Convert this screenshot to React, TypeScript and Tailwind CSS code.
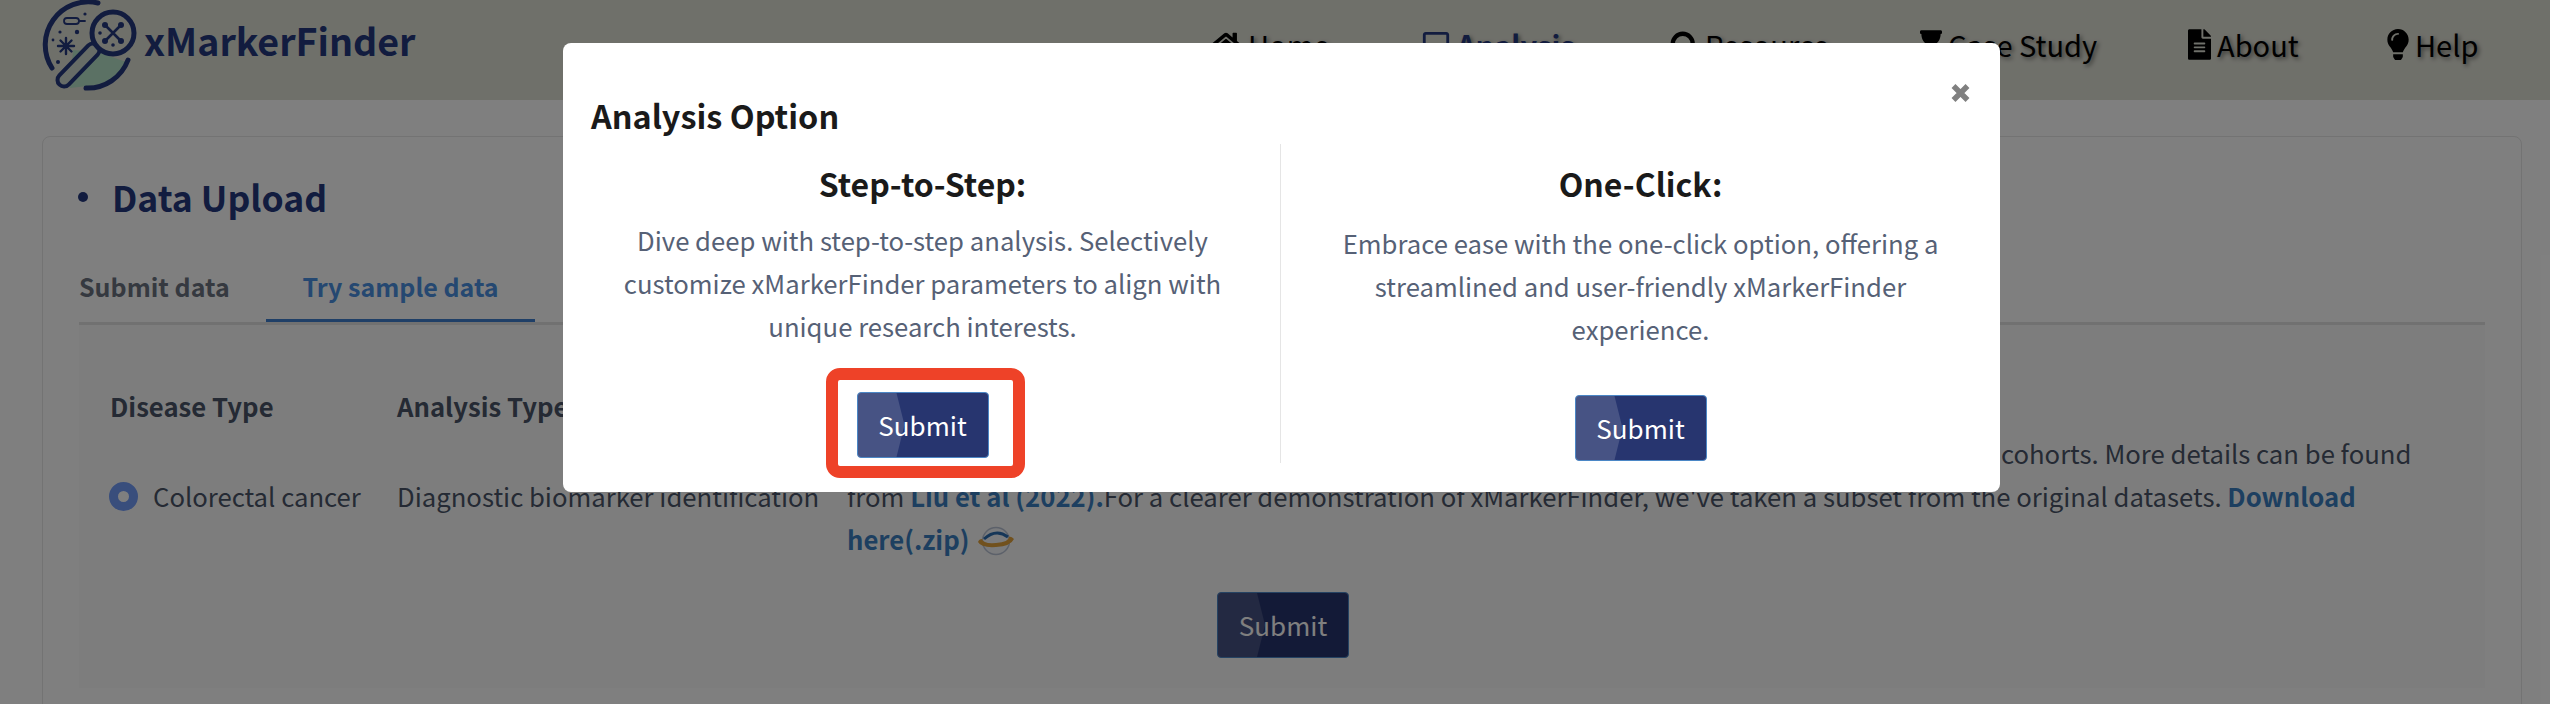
import { FaHome, FaRegSquare, FaFileAlt, FaLightbulb, FaHourglass } from "react-icons/fa";
import { FiSearch } from "react-icons/fi";

const fontStack = { fontFamily: '"Noto Sans CJK SC", "Noto Sans", sans-serif' };

function Logo() {
  return (
    <svg width="100" height="95" viewBox="0 0 100 95" fill="none" stroke="#24397f" strokeLinecap="round" className="shrink-0">
      <path d="M33 50 L58 52 L86 62 Q74 84 48 86 L30 88 Z" fill="#b7e2c8" stroke="none" />
      <path d="M58 3 A43 43 0 0 0 12 68" strokeWidth="5" />
      <path d="M88 60 A43 43 0 0 1 46 88" strokeWidth="5" />
      <line x1="53" y1="50" x2="24" y2="80" strokeWidth="17" />
      <line x1="53" y1="50" x2="24" y2="80" strokeWidth="9" stroke="#cfd8cf" />
      <circle cx="73" cy="33" r="21" strokeWidth="5" fill="#dfe0d5" />
      <path d="M66 26 L80 40 M80 26 L66 40" strokeWidth="2.6" />
      <g fill="#24397f" stroke="none">
        <circle cx="65" cy="25" r="3" />
        <circle cx="81" cy="25" r="3" />
        <circle cx="65" cy="41" r="3" />
        <circle cx="81" cy="41" r="3" />
        <circle cx="60" cy="33" r="1.8" />
        <circle cx="73" cy="45" r="1.8" />
        <circle cx="45" cy="14" r="1.6" />
        <circle cx="37" cy="32" r="2.2" />
        <circle cx="20" cy="32" r="1.6" />
        <circle cx="13" cy="40" r="1.4" />
        <circle cx="18" cy="62" r="2" />
      </g>
      <rect x="24" y="18" width="15" height="6" rx="3" strokeWidth="1.8" />
      <path d="M39 21 L45 21" strokeWidth="1.8" />
      <path d="M26 38 V54 M18 46 H34 M20.500 40.500 L31.500 51.500 M31.500 40.500 L20.500 51.500" strokeWidth="2.4" />
    </svg>
  );
}

function NavItem({ icon, label, active, width }: { icon: React.ReactNode; label: string; active?: boolean; width: string }) {
  return (
    <div className={`flex items-center gap-[6px] text-[29px] [text-shadow:2px_2px_4px_rgba(0,0,0,0.5)] ${width} ${active ? "font-bold text-[#24397f]" : "text-black"}`}>
      {icon}
      <span>{label}</span>
    </div>
  );
}

function SubmitButton({ className = "" }: { className?: string }) {
  return (
    <button className={`relative block w-[132px] h-[66px] rounded-[4px] border border-[#4b87c6] bg-[#27356f] overflow-hidden text-white text-[26px] leading-none ${className}`}>
      <span className="absolute inset-0 bg-white/15 [clip-path:polygon(0_0,39px_0,47px_50%,39px_100%,0_100%)]" />
      <span className="relative">Submit</span>
    </button>
  );
}

function GlobeIcon() {
  return (
    <svg width="38" height="30" viewBox="0 0 38 30" fill="none" className="inline-block align-[-6px] ml-[8px]">
      <circle cx="19" cy="15" r="13.500" fill="#f4f6fa" stroke="#b9c2d4" strokeWidth="1.500" />
      <path d="M7 13 Q19 2 31 11" stroke="#2b6cb0" strokeWidth="3" />
      <path d="M1 16 Q4 22 19 21 Q34 20 37 13 Q34 10 32 11 Q32 16 19 17 Q6 18 5 13 Q2 13 1 16 Z" fill="#e2a23c" />
    </svg>
  );
}

export default function App() {
  return (
    <div className="relative w-[2550px] h-[704px] overflow-hidden bg-white text-[#4a5568]" style={fontStack}>
      {/* Header */}
      <header className="h-[100px] bg-[#dfe0d5] flex items-start pl-[40px]">
        <Logo />
        <div className="ml-[4px] mt-[10px] text-[37.6px] leading-[60px] font-semibold text-[#24397f]">xMarkerFinder</div>
        <nav className="ml-auto pt-[23px] flex items-center">
          <NavItem width="w-[211px]" icon={<FaHome className="w-[32px] h-[28px]" />} label="Home" />
          <NavItem width="w-[248px]" active icon={<FaRegSquare className="w-[30px] h-[30px]" />} label="Analysis" />
          <NavItem width="w-[251px]" icon={<FiSearch className="w-[30px] h-[30px]" strokeWidth={3.500} />} label="Resource" />
          <NavItem width="w-[268px]" icon={<FaHourglass className="w-[22px] h-[30px]" />} label="Case Study" />
          <NavItem width="w-[199px]" icon={<FaFileAlt className="w-[23px] h-[31px]" />} label="About" />
          <NavItem width="w-[163px]" icon={<FaLightbulb className="w-[22px] h-[31px]" />} label="Help" />
        </nav>
      </header>

      {/* Data upload card */}
      <main className="px-[42px] pt-[36px]">
        <section className="h-[700px] w-[2480px] rounded-[8px] border border-[#e6e6e6] pt-[32px] px-[36px]">
          <h1 className="flex items-center text-[35.5px] leading-[56px] font-bold text-[#24397f]">
            <span className="w-[10px] h-[10px] rounded-full bg-[#24397f] ml-[-1px] mr-[24px]" />
            Data Upload
          </h1>
          <div className="mt-[38px] flex h-[62px] border-b-[3px] border-[#e2e2e2] text-[25px] leading-[38px] font-semibold">
            <div className="w-[187px] pt-[4px] text-[#6b7280]">Submit data</div>
            <div className="w-[269px] h-[59px] pt-[4px] text-center text-[#4a90e2] border-b-[3px] border-[#3f7fcf]">Try sample data</div>
          </div>

          {/* Sample table */}
          <div className="bg-[#fbfbfb] h-[363px] pl-[31px] pt-[59px]">
            <div className="grid grid-cols-[287px_450px_1640px] text-[25.7px] leading-[43px]">
              <div className="font-semibold h-[90px]">Disease Type</div>
              <div className="font-semibold">Analysis Type</div>
              <div className="font-semibold">Description</div>
              <div className="flex items-start">
                <span className="mt-[8px] w-[29px] h-[29px] rounded-full border-[9px] border-[#729cf8] bg-white shrink-0 ml-[-1px]" />
                <span className="ml-[15px]">Colorectal cancer</span>
              </div>
              <div className="col-start-2 whitespace-nowrap">Diagnostic biomarker identification</div>
              <div className="col-start-3 row-start-2 mt-[-43px] whitespace-nowrap">
                Sample data is a collection of microbial sequencing profiles of colorectal cancers across multiple cohorts. More details can be found
                <br />
                from <b className="text-[#3a7fc1]">Liu et al (2022).</b>For a clearer demonstration of xMarkerFinder, we've taken a subset from the original datasets. <b className="text-[#3a7fc1]">Download</b>
                <br />
                <b className="text-[#3a7fc1]">here(.zip)</b>
                <GlobeIcon />
              </div>
            </div>
            <SubmitButton className="ml-[1107px] mt-[32px]" />
          </div>
        </section>
      </main>

      {/* Modal overlay */}
      <div className="absolute inset-0 bg-black/50 pl-[563px] pt-[43px]">
        <div className="relative w-[1437px] h-[449px] bg-white rounded-[8px] pl-[28px] pt-[47px]">
          <button className="absolute right-[30px] top-[41px] text-[#808080]">
            <svg width="19" height="18" viewBox="0 0 19 18" stroke="currentColor" strokeWidth="5.5">
              <path d="M2.500 2 L16.500 16 M16.500 2 L2.500 16" />
            </svg>
          </button>
          <h2 className="text-[32.4px] leading-[50px] font-semibold text-[#1a1a1a]">Analysis Option</h2>
          <div className="flex mt-[4px] text-center">
            <div className="w-[690px] h-[319px] pr-[26px] border-r border-[#e5e5e5] flex flex-col items-center">
              <h3 className="mt-[14px] text-[32px] leading-[50px] font-semibold text-[#1a1a1a]">Step-to-Step:</h3>
              <p className="mt-[10px] text-[25.7px] leading-[43px] text-[#566176]">
                Dive deep with step-to-step analysis. Selectively
                <br />
                customize xMarkerFinder parameters to align with
                <br />
                unique research interests.
              </p>
              <div className="relative mt-[45px]">
                <SubmitButton />
                <div className="absolute -left-[31px] -right-[36px] -top-[24px] -bottom-[20px] rounded-[14px] border-[12px] border-[#ee4228]" />
              </div>
            </div>
            <div className="flex-1 h-[319px] flex flex-col items-center">
              <h3 className="mt-[14px] text-[32px] leading-[50px] font-semibold text-[#1a1a1a]">One-Click:</h3>
              <p className="mt-[13px] text-[25.7px] leading-[43px] text-[#566176]">
                Embrace ease with the one-click option, offering a
                <br />
                streamlined and user-friendly xMarkerFinder
                <br />
                experience.
              </p>
              <SubmitButton className="mt-[45px]" />
            </div>
          </div>
        </div>
      </div>
    </div>
  );
}
